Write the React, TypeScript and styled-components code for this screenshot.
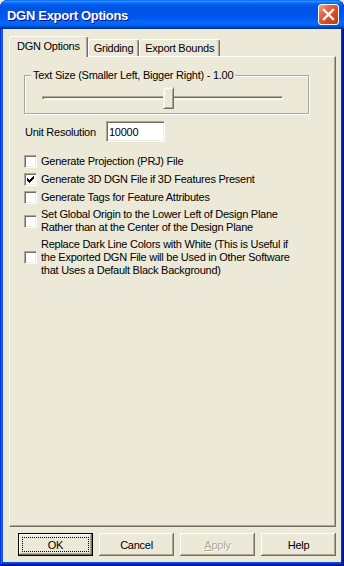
import React from 'react';
import styled, { createGlobalStyle } from 'styled-components';

const GlobalStyle = createGlobalStyle`
  html, body {
    margin: 0;
    padding: 0;
    background: #ece9d8;
  }
  body {
    font-family: "Liberation Sans", Arial, sans-serif;
    font-size: 11px;
    color: #000;
  }
`;

const Window = styled.div`
  width: 344px;
  height: 566px;
  box-sizing: border-box;
  display: flex;
  flex-direction: column;
  padding: 0 3px 4px;
  background: #0855dd;
  border-radius: 8px 8px 0 0;
  overflow: hidden;
  box-shadow: inset -1px -1px #00138c, inset 1px 1px #0831d9,
    inset -2px -2px #001ea0, inset 2px 2px #166aee, inset -3px -3px #003bda,
    inset 3px 3px #0855dd;
`;

const TitleBar = styled.div`
  height: 29px;
  flex-shrink: 0;
  margin: 0 -3px;
  padding: 0 5px 0 7px;
  display: flex;
  align-items: center;
  justify-content: space-between;
  border-radius: 8px 8px 0 0;
  background: linear-gradient(
    180deg,
    #0058ee 0%,
    #3593ff 4%,
    #288eff 6%,
    #127dff 8%,
    #036ffc 10%,
    #0262ee 14%,
    #0057e5 20%,
    #0054e3 24%,
    #0055eb 56%,
    #005bf5 66%,
    #026afe 76%,
    #0062ef 86%,
    #0052d6 92%,
    #0040ab 94%,
    #003092 100%
  );
`;

const Title = styled.span`
  font-family: "Liberation Sans", Arial, sans-serif;
  font-weight: bold;
  font-size: 13px;
  letter-spacing: -0.3px;
  color: #fff;
  text-shadow: 1px 1px #0f1089;
  padding-top: 1px;
`;

const CloseButton = styled.button`
  width: 21px;
  height: 21px;
  box-sizing: border-box;
  padding: 0;
  border: 1px solid #fff;
  border-radius: 3px;
  display: flex;
  align-items: center;
  justify-content: center;
  background: linear-gradient(135deg, #f3a78c 0%, #e3694a 30%, #d84b26 60%, #c13614 100%);
`;

const Body = styled.div`
  flex: 1;
  display: flex;
  flex-direction: column;
  background: #ece9d8;
  padding: 7px 5px 6px 6px;
  min-height: 0;
`;

const TabRow = styled.div`
  height: 20px;
  flex-shrink: 0;
  display: flex;
  align-items: flex-end;
`;

const Tab = styled.div<{ $active?: boolean }>`
  box-sizing: border-box;
  height: ${(p) => (p.$active ? '21px' : '17px')};
  margin-bottom: ${(p) => (p.$active ? '-1px' : '0')};
  padding: ${(p) => (p.$active ? '0 7px 2px' : '0 5px')};
  display: flex;
  align-items: center;
  background: #ece9d8;
  border-top: 1px solid #fff;
  border-left: 1px solid #fff;
  border-right: 1px solid #716f64;
  border-radius: 3px 3px 0 0;
  box-shadow: inset -1px 0 #aca899;
  letter-spacing: -0.25px;
  white-space: nowrap;
  ${(p) => p.$active && 'position: relative; z-index: 1;'}
`;

const Panel = styled.div`
  flex: 1;
  display: flex;
  flex-direction: column;
  align-items: flex-start;
  padding: 0 0 0 14px;
  border-top: 1px solid #fff;
  border-left: 1px solid #fff;
  border-right: 1px solid #716f64;
  border-bottom: 1px solid #716f64;
  box-shadow: inset -1px -1px #aca899;
`;

const GroupBox = styled.fieldset`
  box-sizing: border-box;
  width: 285px;
  margin: 12px 0 0;
  padding: 5px 0 4px 6px;
  min-width: 0;
  border: 1px solid #aca899;
  box-shadow: inset 1px 1px #fff, 1px 1px #fff;
`;

const Legend = styled.legend`
  margin-left: 0;
  padding: 0 2px;
  line-height: 13px;
  letter-spacing: -0.25px;
  background: #ece9d8;
`;

const TrackBar = styled.div`
  position: relative;
  width: 241px;
  height: 22px;
  margin-left: 11px;
`;

const Channel = styled.div`
  position: absolute;
  left: 0;
  right: 0;
  top: 9px;
  height: 4px;
  box-sizing: border-box;
  border-top: 1px solid #aca899;
  border-left: 1px solid #aca899;
  border-bottom: 1px solid #fff;
  border-right: 1px solid #fff;
  box-shadow: inset 1px 1px #716f64, inset -1px -1px #f1efe2;
`;

const Thumb = styled.div`
  position: absolute;
  top: 0;
  width: 11px;
  height: 22px;
  box-sizing: border-box;
  background: #ece9d8;
  border-top: 1px solid #f1efe2;
  border-left: 1px solid #f1efe2;
  border-right: 1px solid #716f64;
  border-bottom: 1px solid #716f64;
  box-shadow: inset 1px 1px #fff, inset -1px -1px #aca899;
`;

const FieldRow = styled.div`
  display: flex;
  align-items: center;
  margin: 7px 0 0 1px;
`;

const FieldLabel = styled.span`
  width: 81px;
  letter-spacing: -0.25px;
`;

const TextInput = styled.input`
  box-sizing: border-box;
  width: 59px;
  height: 21px;
  margin: 0;
  padding: 0 0 0 2px;
  font-family: "Liberation Sans", Arial, sans-serif;
  font-size: 11px;
  letter-spacing: -0.25px;
  color: #000;
  background: #fff;
  border-top: 1px solid #aca899;
  border-left: 1px solid #aca899;
  border-bottom: 1px solid #fff;
  border-right: 1px solid #fff;
  box-shadow: inset 1px 1px #716f64, inset -1px -1px #f1efe2;
  outline: none;
`;

const CheckList = styled.div`
  display: flex;
  flex-direction: column;
  margin-top: 10px;
`;

const CheckRow = styled.label`
  display: flex;
  align-items: center;
  gap: 4px;
  min-height: 18px;
  box-sizing: border-box;
  padding: 2px 0;
`;

const Box = styled.span`
  width: 13px;
  height: 13px;
  flex-shrink: 0;
  box-sizing: border-box;
  display: flex;
  align-items: center;
  justify-content: center;
  background: #fff;
  border-top: 1px solid #aca899;
  border-left: 1px solid #aca899;
  border-bottom: 1px solid #fff;
  border-right: 1px solid #fff;
  box-shadow: inset 1px 1px #716f64, inset -1px -1px #f1efe2;
`;

const CheckText = styled.span`
  line-height: 13px;
  letter-spacing: -0.25px;
  white-space: nowrap;
`;

const ButtonRow = styled.div`
  display: flex;
  justify-content: flex-end;
  gap: 6px;
  margin-top: 6px;
  flex-shrink: 0;
`;

const Button = styled.button<{ $default?: boolean }>`
  width: 75px;
  height: 23px;
  box-sizing: border-box;
  margin: 0;
  padding: 0;
  font-family: "Liberation Sans", Arial, sans-serif;
  font-size: 11px;
  letter-spacing: -0.25px;
  color: #000;
  background: #ece9d8;
  border: ${(p) => (p.$default ? '1px solid #000' : 'none')};
  box-shadow: inset -1px -1px #716f64, inset 1px 1px #fff, inset -2px -2px #aca899;
  outline: ${(p) => (p.$default ? '1px dotted #000' : 'none')};
  outline-offset: -5px;

  &:disabled {
    color: #aca899;
    text-shadow: 1px 1px #fff;
  }

  u {
    text-decoration: underline;
  }
`;

const CheckMark = () => (
  <svg width="7" height="7" viewBox="0 0 7 7" shapeRendering="crispEdges">
    <path d="M0 2 L2 4 L6 0 L7 0 L7 3 L2 7 L0 5 Z" fill="#000" />
  </svg>
);

const CloseIcon = () => (
  <svg width="13" height="13" viewBox="0 0 13 13">
    <path d="M2 2 L11 11 M11 2 L2 11" stroke="#fff" strokeWidth="2.4" strokeLinecap="square" />
  </svg>
);

type Option = { lines: string[]; checked: boolean };

const options: Option[] = [
  { lines: ['Generate Projection (PRJ) File'], checked: false },
  { lines: ['Generate 3D DGN File if 3D Features Present'], checked: true },
  { lines: ['Generate Tags for Feature Attributes'], checked: false },
  {
    lines: ['Set Global Origin to the Lower Left of Design Plane', 'Rather than at the Center of the Design Plane'],
    checked: false,
  },
  {
    lines: [
      'Replace Dark Line Colors with White (This is Useful if',
      'the Exported DGN File will be Used in Other Software',
      'that Uses a Default Black Background)',
    ],
    checked: false,
  },
];

const textSize = 1.0;
const sliderMin = 0;
const sliderMax = 2;

const App = () => {
  const thumbLeft = Math.round(((textSize - sliderMin) / (sliderMax - sliderMin)) * 242);
  return (
    <>
      <GlobalStyle />
      <Window>
        <TitleBar>
          <Title>DGN Export Options</Title>
          <CloseButton aria-label="Close">
            <CloseIcon />
          </CloseButton>
        </TitleBar>
        <Body>
          <TabRow>
            <Tab $active>DGN Options</Tab>
            <Tab>Gridding</Tab>
            <Tab>Export Bounds</Tab>
          </TabRow>
          <Panel>
            <GroupBox>
              <Legend>Text Size (Smaller Left, Bigger Right) - {textSize.toFixed(2)}</Legend>
              <TrackBar>
                <Channel />
                <Thumb style={{ left: thumbLeft }} />
              </TrackBar>
            </GroupBox>
            <FieldRow>
              <FieldLabel>Unit Resolution</FieldLabel>
              <TextInput defaultValue="10000" />
            </FieldRow>
            <CheckList>
              {options.map((o, i) => (
                <CheckRow key={i}>
                  <Box>{o.checked && <CheckMark />}</Box>
                  <CheckText>
                    {o.lines.map((l, j) => (
                      <React.Fragment key={j}>
                        {j > 0 && <br />}
                        {l}
                      </React.Fragment>
                    ))}
                  </CheckText>
                </CheckRow>
              ))}
            </CheckList>
          </Panel>
          <ButtonRow>
            <Button $default>OK</Button>
            <Button>Cancel</Button>
            <Button disabled>
              <u>A</u>pply
            </Button>
            <Button>Help</Button>
          </ButtonRow>
        </Body>
      </Window>
    </>
  );
};

export default App;
